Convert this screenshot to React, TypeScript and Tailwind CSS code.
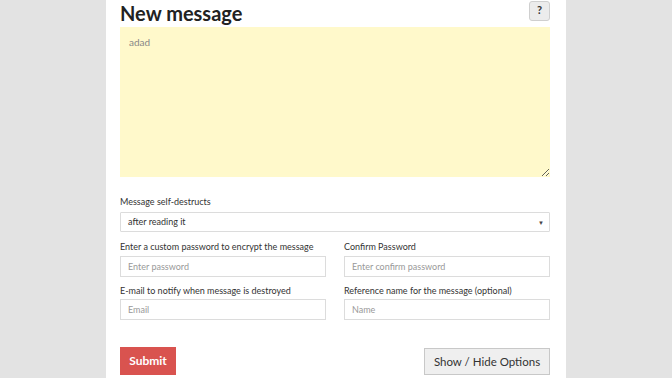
export default function App() {
  return (
    <div className="min-h-screen w-full bg-[#e3e3e3] flex justify-center" style={{ fontFamily: 'Lato, "Noto Sans", sans-serif' }}>
      <div className="w-[460px] bg-white pl-[14px] pr-[16px] h-[378px] overflow-hidden">
        {/* header */}
        <div className="flex items-center justify-between h-[27px]">
          <h1 className="text-[20px] font-bold text-[#222] leading-none mt-[-2px]">New message</h1>
          <button className="w-[21px] h-[20px] mt-[-6px] rounded-[3px] border border-[#cfcfcf] bg-[#ececec] text-[11px] font-bold text-[#333] flex items-center justify-center">
            ?
          </button>
        </div>

        <textarea
          defaultValue="adad"
          className="block w-full h-[150px] bg-[#fff9cb] px-[9px] py-[8px] text-[10px] text-[#888] outline-none resize-y"
        />

        <div className="mt-[19px]">
          <label className="block text-[9px] text-[#333] mb-[5px] leading-[11px]">Message self-destructs</label>
          <div className="relative h-[20px] border border-[#dcdcdc] rounded-[1px] flex items-center px-[7px] text-[9px] text-[#333]">
            after reading it
            <span className="absolute right-[5px] top-[5px] text-[6px] text-[#444]">▼</span>
          </div>
        </div>

        <div className="grid grid-cols-2 gap-x-[18px] mt-[9px]">
          <div>
            <label className="block text-[9px] text-[#333] mb-[4px] leading-[11px]">Enter a custom password to encrypt the message</label>
            <input placeholder="Enter password" className="block w-full h-[21px] border border-[#dcdcdc] px-[7px] text-[9px] placeholder-[#999] outline-none" />
          </div>
          <div>
            <label className="block text-[9px] text-[#333] mb-[4px] leading-[11px]">Confirm Password</label>
            <input placeholder="Enter confirm password" className="block w-full h-[21px] border border-[#dcdcdc] px-[7px] text-[9px] placeholder-[#999] outline-none" />
          </div>
          <div className="mt-[8px]">
            <label className="block text-[9px] text-[#333] mb-[3px] leading-[11px]">E-mail to notify when message is destroyed</label>
            <input placeholder="Email" className="block w-full h-[21px] border border-[#dcdcdc] px-[7px] text-[9px] placeholder-[#999] outline-none" />
          </div>
          <div className="mt-[8px]">
            <label className="block text-[9px] text-[#333] mb-[3px] leading-[11px]">Reference name for the message (optional)</label>
            <input placeholder="Name" className="block w-full h-[21px] border border-[#dcdcdc] px-[7px] text-[9px] placeholder-[#999] outline-none" />
          </div>
        </div>

        <div className="flex items-end justify-between mt-[27px]">
          <button className="h-[28px] w-[56px] bg-[#d9534f] text-white text-[12px] font-bold">Submit</button>
          <button className="h-[27px] w-[126px] bg-[#efefef] border border-[#c8c8c8] text-[11.5px] text-[#333]">Show / Hide Options</button>
        </div>
      </div>
    </div>
  )
}
